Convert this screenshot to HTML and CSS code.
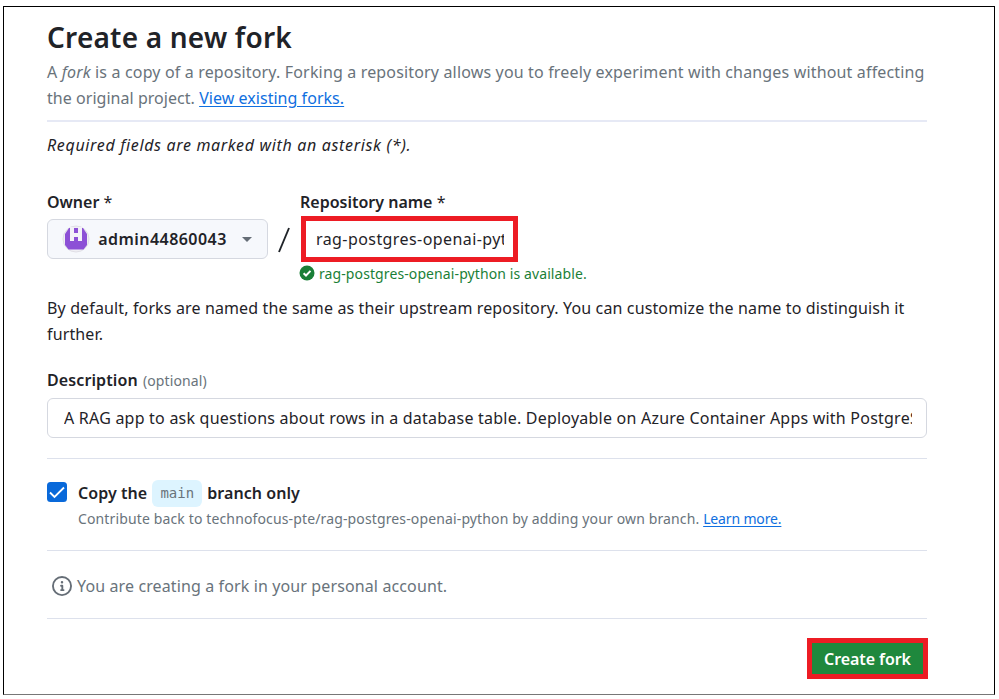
FILE: index.html
```
<!DOCTYPE html>
<html lang="en">
<head>
<meta charset="utf-8">
<title>Create a new fork</title>
<link rel="stylesheet" href="styles.css">
</head>
<body>
<main class="frame">
  <h1 class="title">Create a new fork</h1>
  <p class="lead">A <em>fork</em> is a copy of a repository. Forking a repository allows you to freely experiment with changes without affecting<br><span class="lead-end">the original project. <a href="#">View existing forks.</a></span></p>
  <hr class="rule rule-thick">
  <p class="required">Required fields are marked with an asterisk (*).</p>

  <div class="name-row">
    <div class="owner">
      <div class="label">Owner <span class="star">*</span></div>
      <button class="owner-button" type="button">
        <svg class="avatar" width="28" height="28" viewBox="0 0 28 28">
          <circle cx="14" cy="14" r="13" fill="#f0eff4" stroke="#e0dfe6" stroke-width="1"/>
          <path d="M3 9l4-6h14l4 6v11l-3.500 4.500h-15L3 20z" fill="#8c50d6"/>
          <path d="M8 2h4v6h4V2h4v14h-4v-4h-4v4H8z" fill="#f3f1f8"/>
        </svg>
        <span class="owner-name">admin44860043</span>
        <i class="caret"></i>
      </button>
    </div>
    <svg class="slash" width="12" height="26" viewBox="0 0 12 26"><path d="M11 1L1 25" stroke="#1f2328" stroke-width="1.900"/></svg>
    <div class="repo">
      <div class="label">Repository name <span class="star">*</span></div>
      <div class="repo-input"><div class="clip">rag-postgres-openai-python</div></div>
      <div class="hint">
        <svg width="16" height="16" viewBox="0 0 16 16"><circle cx="8" cy="8" r="7.500" fill="#1a7f37"/><path d="M4.600 8.200l2.400 2.300 4.500-4.600" fill="none" stroke="#fff" stroke-width="2"/></svg>
        <span>rag-postgres-openai-python is available.</span>
      </div>
    </div>
  </div>

  <p class="note">By default, forks are named the same as their upstream repository. You can customize the name to distinguish it<br>further.</p>

  <div class="label desc-label">Description <small>(optional)</small></div>
  <div class="desc-input"><div class="clip">A RAG app to ask questions about rows in a database table. Deployable on Azure Container Apps with PostgreSQL</div></div>
  <hr class="rule">

  <div class="branch">
    <svg class="check" width="20" height="20" viewBox="0 0 20 20"><rect width="20" height="20" rx="3.500" fill="#0969da"/><path d="M3 10.500l4.500 4.500L17 5.500" fill="none" stroke="#fff" stroke-width="1.800"/></svg>
    <div>
      <div class="branch-title"><span>Copy the</span><code>main</code><span>branch only</span></div>
      <div class="caption">Contribute back to technofocus-pte/rag-postgres-openai-python by adding your own branch. <a href="#">Learn more.</a></div>
    </div>
  </div>
  <hr class="rule">

  <div class="info">
    <svg width="20" height="20" viewBox="0 0 16 16" fill="#656d76"><path d="M0 8a8 8 0 1 1 16 0A8 8 0 0 1 0 8Zm8-6.500a6.500 6.500 0 1 0 0 13 6.500 6.500 0 0 0 0-13ZM6.500 7.750A.75.75 0 0 1 7.250 7h1a.75.75 0 0 1 .75.750v2.750h.250a.75.75 0 0 1 0 1.500h-2a.75.75 0 0 1 0-1.500h.250v-2h-.250a.75.75 0 0 1-.75-.750ZM8 6a1 1 0 1 1 0-2 1 1 0 0 1 0 2Z"/></svg>
    <span>You are creating a fork in your personal account.</span>
  </div>
  <hr class="rule">
  <div class="actions"><button class="submit" type="button">Create fork</button></div>
</main>
</body>
</html>
```
FILE: styles.css
```
* { box-sizing: border-box; }
body {
  margin: 0;
  padding: 6px 4px 4px 3px;
  background: #fff;
  color: #1f2328;
  font-family: "Noto Sans", "Open Sans", sans-serif;
  font-size: 16px;
}
a { color: #0f6fe0; text-decoration: underline; text-underline-offset: 2px; }
p, h1 { margin: 0; }
button { font-family: inherit; color: inherit; padding: 0; }
.frame {
  width: 992px;
  height: 689px;
  padding: 14px 67px 0 43px;
  border: 1px solid #000;
  border-bottom-color: #777;
}
.title { font-size: 28px; line-height: 32px; font-weight: 600; letter-spacing: 0.21px; }
.lead { margin-top: 6px; line-height: 26px; color: #69737b; letter-spacing: 0.16px; white-space: nowrap; }
.lead-end { letter-spacing: 0.04px; }
.rule { height: 1px; margin: 0; border: 0; background: #dde1ec; }
.rule-thick { height: 2px; margin-top: 9px; background: #e6e9f5; }
.required { margin-top: 10px; line-height: 26px; font-style: italic; letter-spacing: 0.66px; }
.name-row { display: flex; margin-top: 34px; }
.label { font-size: 16px; line-height: 20px; font-weight: 600; white-space: nowrap; }
.star { font-weight: 400; }
.owner-button {
  display: flex;
  align-items: center;
  width: 221px;
  height: 40px;
  margin-top: 7px;
  padding-left: 14px;
  background: #f6f8fc;
  border: 1px solid #d5d8e0;
  border-radius: 6px;
}
.owner-name { width: 129px; margin-left: 8px; font-size: 16px; font-weight: 600; letter-spacing: 0.45px; }
.caret { margin-left: 15px; border: 5px solid transparent; border-top-color: #656d76; border-bottom: 0; }
.slash { margin: 35px 0 0 10px; }
.repo { margin-left: 10px; }
.repo-input {
  display: flex;
  align-items: center;
  width: 217px;
  height: 46px;
  margin: 4px 0 0 1px;
  padding-left: 10px;
  border: 5px solid #ed1c24;
}
.clip { overflow: hidden; white-space: nowrap; }
.repo-input .clip { width: 188px; letter-spacing: 0.42px; }
.hint { display: flex; align-items: center; gap: 4px; height: 20px; margin: 1px 0 0 -1px; font-size: 14px; letter-spacing: 0.1px; color: #1a7f37; white-space: nowrap; }
.note { margin-top: 12px; line-height: 26px; letter-spacing: 0.135px; white-space: nowrap; }
.desc-label { margin-top: 23px; letter-spacing: 0.1px; }
.desc-label small { margin-left: 1px; font-size: 14px; font-weight: 400; color: #69737b; }
.desc-input {
  display: flex;
  align-items: center;
  height: 40px;
  margin: 7px 0 20px;
  padding-left: 16px;
  border: 1px solid #d5d8e0;
  border-radius: 6px;
}
.desc-input .clip { width: 848px; letter-spacing: 0.223px; }
.branch { display: flex; height: 91px; }
.check { margin: 23px 11px 0 0; }
.branch-title { display: flex; align-items: center; height: 27px; margin-top: 21px; font-weight: 600; }
.branch-title span { margin-top: -2px; letter-spacing: 0.06px; }
.branch-title code {
  width: 50px;
  margin: 0 5px;
  font: 14px/27px "DejaVu Sans Mono", monospace;
  color: #69737b;
  text-align: center;
  background: #ddf4ff;
  border-radius: 6px;
}
.caption { margin-top: 2px; font-size: 14px; line-height: 20px; color: #69737b; letter-spacing: 0.135px; white-space: nowrap; }
.caption a { letter-spacing: -0.15px; }
.info { display: flex; align-items: center; gap: 5px; height: 67px; padding: 3px 0 0 5px; color: #69737b; letter-spacing: 0.12px; }
.actions { display: flex; justify-content: flex-end; margin: 19px -1px 0 0; }
.submit { width: 121px; height: 41px; color: #fff; background: #1f883d; border: 5px solid #ed1c24; font-size: 16px; font-weight: 600; letter-spacing: -0.08px; }
```
